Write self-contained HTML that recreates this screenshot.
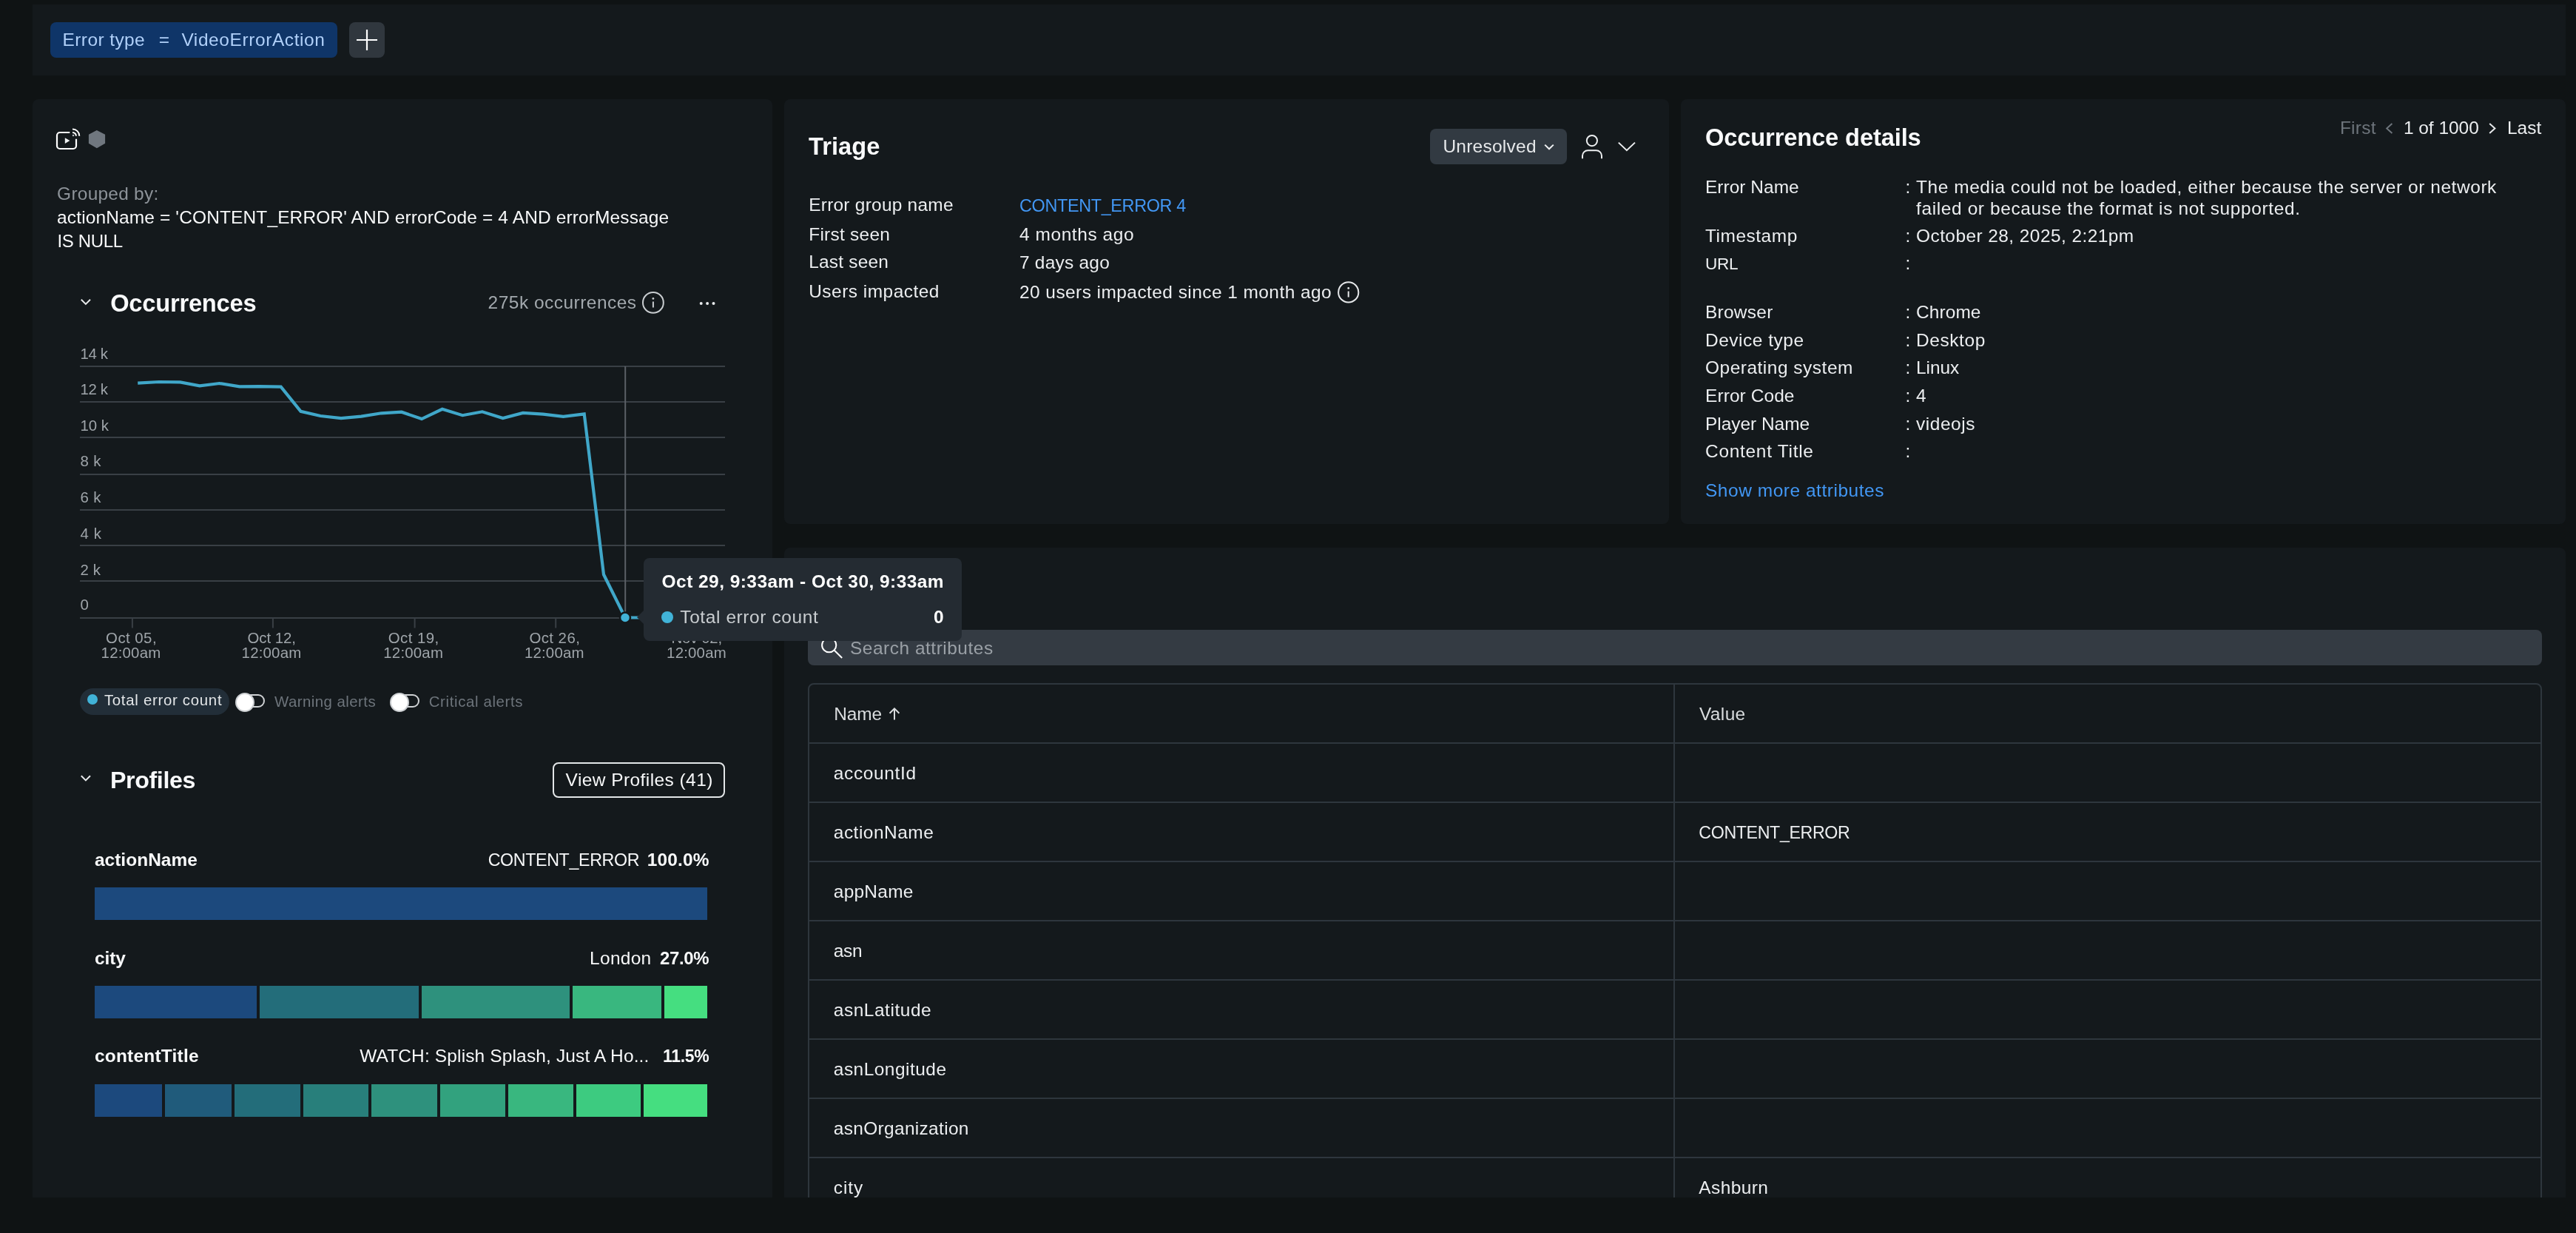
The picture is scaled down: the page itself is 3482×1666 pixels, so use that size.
<!DOCTYPE html>
<html lang="en"><head><meta charset="utf-8"><title>Errors inbox - CONTENT_ERROR 4</title>
<style>
*{box-sizing:border-box;margin:0;padding:0}
html,body{width:3482px;height:1666px;overflow:hidden;background:#0f1314}
body{position:relative;font-family:"Liberation Sans", Arial, sans-serif;color:#eceef0}
header,section,aside,footer,svg,.t,section div,header div,aside div{position:absolute}
.t{white-space:pre;line-height:1;display:block;font-weight:400;text-decoration:none}
header,section,aside{will-change:transform}
h2.t,b.t{font-weight:700}
.panel{background:#14191c;border-radius:8px;overflow:hidden}
.topbar{left:44px;top:6px;width:3424px;height:96px;background:#14191c}
.chip{border-radius:8px;background:#0f3568}
.addbtn{border-radius:8px;background:#30373e}
.left{left:44px;top:134px;width:1000px;height:1484px;border-radius:8px 8px 0 0}
.triage{left:1060px;top:134px;width:1196px;height:574px}
.details{left:2272px;top:134px;width:1196px;height:574px}
.attrs{left:1060px;top:740px;width:2408px;height:878px;border-radius:8px 8px 0 0}
.pill{border-radius:18px;background:#222e38}
.dot{border-radius:50%;background:#41b3d8}
.toggle{width:38px;height:18.4px;border:2px solid #d0d3d5;border-radius:9.2px}
.knob{width:26px;height:26px;border-radius:50%;background:#fff;border:2px solid #cdd0d3}
.vbtn{border:2px solid #e3e6e8;border-radius:8px}
.ubtn{border-radius:8px;background:#323a42}
.search{border-radius:8px;background:#343b43}
.table{border:2px solid #2e363d;border-radius:8px}
.hr,.vr{background:#2e363d}
.tip{left:870px;top:754px;width:430px;height:112px;border-radius:8px;background:#242b32}
.tiparrow{width:0;height:0;border-top:9px solid transparent;border-bottom:9px solid transparent;border-right:9px solid #242b32}
.bottom{left:0;top:1618px;width:3482px;height:48px;background:#0f1314}
</style></head>
<body>
<header class="topbar">
<div class="chip" style="left:24px;top:24px;width:388px;height:48px"></div>
<span class="t" style="left:40.5px;top:36px;font-size:24.48px;color:#b0d0f9;letter-spacing:0.42px">Error type</span>
<span class="t" style="left:170.7px;top:36px;font-size:24.48px;color:#b0d0f9">=</span>
<span class="t" style="left:201.4px;top:36px;font-size:24.48px;color:#b0d0f9;letter-spacing:0.60px">VideoErrorAction</span>
<div class="addbtn" style="left:428px;top:24px;width:48px;height:48px"></div>
<svg style="left:428px;top:24px" width="48" height="48" viewBox="472 30 48 48" fill="none"><path d="M482 54H510M496 40V68" stroke="#fff" stroke-width="2.2"/></svg>
</header>
<section class="panel left">
<svg style="left:22px;top:26px" width="90" height="56" viewBox="66 160 90 56" fill="none" stroke="#fff" stroke-width="2.2"><path d="M94.3 179H81a4 4 0 0 0-4 4v14a4 4 0 0 0 4 4h18a4 4 0 0 0 4-4V187.7"/>
<path d="M87.8 186.2V193.9L94.4 190Z" fill="#f1f3f4" stroke="none"/>
<path d="M98 179a4.8 4.8 0 0 1 4.9 4.7M98 174.5a9.2 9.2 0 0 1 9.3 9.2" stroke-width="2"/>
<rect x="97.9" y="181.9" width="2.2" height="2.2" fill="#b5babe" stroke="none"/>
<path d="M130.8 175.9L142.1 181.8V193.8L130.9 200.2L119.9 193.8V181.8Z" fill="#70777f" stroke="none"/></svg>
<span class="t" style="left:33.1px;top:116px;font-size:24.48px;color:#8d9399;letter-spacing:0.25px">Grouped by:</span>
<span class="t" style="left:33.1px;top:148px;font-size:24.48px;color:#f8f9fa;letter-spacing:0.14px">actionName = 'CONTENT_ERROR' AND errorCode = 4 AND errorMessage</span>
<span class="t" style="left:33.5px;top:180.4px;font-size:24.03px;color:#f8f9fa;letter-spacing:-0.35px">IS NULL</span>
<svg style="left:56px;top:256px" width="900" height="40" viewBox="100 390 900 40" fill="none" stroke="#e8eaec" stroke-width="2"><path d="M109.8 404.8L115.9 410.9L122 404.8"/>
<circle cx="882.9" cy="408.9" r="13.9" stroke="#c9cdd0"/><path d="M882.9 407.5V415.5" stroke="#c9cdd0"/><circle cx="882.9" cy="403.4" r="1.4" fill="#c9cdd0" stroke="none"/>
<circle cx="947.7" cy="410.1" r="2" fill="#e8eaec" stroke="none"/><circle cx="956.1" cy="410.1" r="2" fill="#e8eaec" stroke="none"/><circle cx="964.5" cy="410.1" r="2" fill="#e8eaec" stroke="none"/></svg>
<h2 class="t" style="left:105.2px;top:260.1px;font-size:32.64px;color:#f8f9fa;letter-spacing:-0.21px">Occurrences</h2>
<span class="t" style="left:615.6px;top:262.8px;font-size:24.48px;color:#a3a9ae;letter-spacing:0.49px">275k occurrences</span>
<svg style="left:0px;top:306px" width="1000" height="440" viewBox="44 440 1000 440" fill="none"><path d="M108 495H980" stroke="#393f45" stroke-width="2"/><path d="M108 543H980" stroke="#393f45" stroke-width="2"/><path d="M108 591H980" stroke="#393f45" stroke-width="2"/><path d="M108 641H980" stroke="#393f45" stroke-width="2"/><path d="M108 689H980" stroke="#393f45" stroke-width="2"/><path d="M108 737H980" stroke="#393f45" stroke-width="2"/><path d="M108 785H980" stroke="#393f45" stroke-width="2"/><path d="M108 835H980" stroke="#393f45" stroke-width="2"/><path d="M178.9 835V848.5" stroke="#393f45" stroke-width="2"/><path d="M368.9 835V848.5" stroke="#393f45" stroke-width="2"/><path d="M560.6 835V848.5" stroke="#393f45" stroke-width="2"/><path d="M751.2 835V848.5" stroke="#393f45" stroke-width="2"/><path d="M941.2 835V848.5" stroke="#393f45" stroke-width="2"/><path d="M845.2 495V835" stroke="#5b6066" stroke-width="2"/><polyline points="186.2,517.6 214.8,516.0 243.6,516.4 269.9,521.3 296.6,518.0 323.8,522.3 351.1,522.1 379.7,522.7 406.5,555.8 433.2,562.0 461.0,565.1 488.3,562.6 515.5,558.3 542.8,556.7 570.0,566.1 597.8,552.8 625.2,561.2 651.9,556.3 679.7,565.1 706.9,557.9 734.2,559.6 761.4,562.8 789.7,559.3 816,776.3 845.0,834.5 900,834.5" stroke="#40a7c9" stroke-width="4.2"/><circle cx="845" cy="834.5" r="7" fill="#41b3d8" stroke="#14191c" stroke-width="2.5"/></svg>
<span class="t" style="left:64.4px;top:334.4px;font-size:20.4px;color:#9fa5aa;letter-spacing:-0.35px">14 k</span>
<span class="t" style="left:64.4px;top:382.4px;font-size:20.4px;color:#9fa5aa;letter-spacing:-0.35px">12 k</span>
<span class="t" style="left:64.4px;top:431px;font-size:20.4px;color:#9fa5aa;letter-spacing:-0.02px">10 k</span>
<span class="t" style="left:64.4px;top:479.4px;font-size:20.4px;color:#9fa5aa;letter-spacing:0.40px">8 k</span>
<span class="t" style="left:64.4px;top:528.1px;font-size:20.4px;color:#9fa5aa;letter-spacing:0.40px">6 k</span>
<span class="t" style="left:64.4px;top:576.6px;font-size:20.4px;color:#9fa5aa;letter-spacing:0.65px">4 k</span>
<span class="t" style="left:64.4px;top:625.5px;font-size:20.4px;color:#9fa5aa;letter-spacing:0.15px">2 k</span>
<span class="t" style="left:64.4px;top:673.1px;font-size:20.4px;color:#9fa5aa">0</span>
<span class="t" style="left:99.1px;top:717.9px;font-size:20.4px;color:#9fa5aa;letter-spacing:0.46px">Oct 05,</span>
<span class="t" style="left:92.6px;top:737.9px;font-size:20.4px;color:#9fa5aa;letter-spacing:0.21px">12:00am</span>
<span class="t" style="left:290.5px;top:717.9px;font-size:20.4px;color:#9fa5aa;letter-spacing:-0.04px">Oct 12,</span>
<span class="t" style="left:282.6px;top:737.9px;font-size:20.4px;color:#9fa5aa;letter-spacing:0.21px">12:00am</span>
<span class="t" style="left:480.8px;top:717.9px;font-size:20.4px;color:#9fa5aa;letter-spacing:0.46px">Oct 19,</span>
<span class="t" style="left:474.3px;top:737.9px;font-size:20.4px;color:#9fa5aa;letter-spacing:0.21px">12:00am</span>
<span class="t" style="left:671.4px;top:717.9px;font-size:20.4px;color:#9fa5aa;letter-spacing:0.46px">Oct 26,</span>
<span class="t" style="left:664.9px;top:737.9px;font-size:20.4px;color:#9fa5aa;letter-spacing:0.21px">12:00am</span>
<span class="t" style="left:863.6px;top:717.9px;font-size:20.4px;color:#9fa5aa;letter-spacing:-0.30px">Nov 02,</span>
<span class="t" style="left:857.1px;top:737.9px;font-size:20.4px;color:#9fa5aa;letter-spacing:0.21px">12:00am</span>
<div class="pill" style="left:64px;top:796px;width:202px;height:36px"></div>
<div class="dot" style="left:74px;top:804px;width:14px;height:14px"></div>
<span class="t" style="left:96.9px;top:802.4px;font-size:20.4px;color:#e3e6e8;letter-spacing:0.71px">Total error count</span>
<div class="toggle" style="left:276px;top:803.7px"></div>
<div class="knob" style="left:274px;top:802px"></div>
<span class="t" style="left:327px;top:804.3px;font-size:20.4px;color:#6d747b;letter-spacing:0.46px">Warning alerts</span>
<div class="toggle" style="left:484.8px;top:803.7px"></div>
<div class="knob" style="left:482.8px;top:802px"></div>
<span class="t" style="left:535.7px;top:804.3px;font-size:20.4px;color:#6d747b;letter-spacing:0.64px">Critical alerts</span>
<svg style="left:56px;top:906px" width="40" height="30" viewBox="100 1040 40 30" fill="none" stroke="#e8eaec" stroke-width="2"><path d="M109.8 1048.3L115.9 1054.4L122 1048.3"/></svg>
<h2 class="t" style="left:104.9px;top:903.9px;font-size:32.2px;color:#f8f9fa;letter-spacing:-0.35px">Profiles</h2>
<div class="vbtn" style="left:703px;top:896px;width:233px;height:48px"></div>
<span class="t" style="left:720.6px;top:908.2px;font-size:24.48px;color:#f8f9fa;letter-spacing:0.44px">View Profiles (41)</span>
<b class="t" style="left:83.9px;top:1015.5px;font-size:24.48px;color:#f8f9fa;letter-spacing:0.03px">actionName</b>
<span class="t" style="left:615.7px;top:1016.5px;font-size:23.22px;color:#f8f9fa;letter-spacing:-0.35px">CONTENT_ERROR</span>
<b class="t" style="left:830.7px;top:1015.5px;font-size:24.48px;color:#f8f9fa;letter-spacing:0.18px">100.0%</b>
<div class="seg" style="left:84px;top:1065px;width:828px;height:44px;background:#1c497d"></div>
<b class="t" style="left:83.9px;top:1148.6px;font-size:24.48px;color:#f8f9fa;letter-spacing:-0.06px">city</b>
<span class="t" style="left:753.1px;top:1148.6px;font-size:24.48px;color:#f8f9fa;letter-spacing:0.29px">London</span>
<b class="t" style="left:848.1px;top:1149px;font-size:23.95px;color:#f8f9fa;letter-spacing:-0.35px">27.0%</b>
<div class="seg" style="left:84px;top:1198px;width:219px;height:44px;background:#1c497d"></div>
<div class="seg" style="left:307.2px;top:1198px;width:214.8px;height:44px;background:#236d7a"></div>
<div class="seg" style="left:526.2px;top:1198px;width:199.8px;height:44px;background:#2e917d"></div>
<div class="seg" style="left:730.1px;top:1198px;width:120.1px;height:44px;background:#39b77f"></div>
<div class="seg" style="left:854px;top:1198px;width:58px;height:44px;background:#45de80"></div>
<b class="t" style="left:83.9px;top:1281.2px;font-size:24.48px;color:#f8f9fa;letter-spacing:0.22px">contentTitle</b>
<span class="t" style="left:442.2px;top:1281.2px;font-size:24.48px;color:#f8f9fa;letter-spacing:0.15px">WATCH: Splish Splash, Just A Ho...</span>
<b class="t" style="left:852.1px;top:1282.4px;font-size:22.99px;color:#f8f9fa;letter-spacing:-0.35px">11.5%</b>
<div class="seg" style="left:84px;top:1331px;width:91px;height:44px;background:#1c497d"></div>
<div class="seg" style="left:179px;top:1331px;width:90px;height:44px;background:#205b7b"></div>
<div class="seg" style="left:273.2px;top:1331px;width:88.8px;height:44px;background:#236d7a"></div>
<div class="seg" style="left:366.2px;top:1331px;width:87.8px;height:44px;background:#287f7b"></div>
<div class="seg" style="left:458.1px;top:1331px;width:88.9px;height:44px;background:#2e917d"></div>
<div class="seg" style="left:551.1px;top:1331px;width:87.9px;height:44px;background:#32a27e"></div>
<div class="seg" style="left:643px;top:1331px;width:88px;height:44px;background:#39b77f"></div>
<div class="seg" style="left:735px;top:1331px;width:87.2px;height:44px;background:#3dcb80"></div>
<div class="seg" style="left:826px;top:1331px;width:86px;height:44px;background:#45de80"></div>
</section>
<section class="panel triage">
<h2 class="t" style="left:33px;top:48.1px;font-size:32.64px;color:#f8f9fa;letter-spacing:0.04px">Triage</h2>
<div class="ubtn" style="left:873px;top:40px;width:185px;height:48px"></div>
<span class="t" style="left:890.4px;top:52px;font-size:24.48px;color:#e6e8ea;letter-spacing:0.26px">Unresolved</span>
<svg style="left:1020px;top:36px" width="150" height="56" viewBox="2080 170 150 56" fill="none" stroke="#eceef0" stroke-width="2"><path d="M2088.2 195.6L2094 201.3L2099.8 195.6"/>
<circle cx="2151.9" cy="190.1" r="7.1"/><path d="M2139 214.2V210.5a7.3 7.3 0 0 1 7.3-7.3h11.4a7.3 7.3 0 0 1 7.3 7.3V214.2"/>
<path d="M2187.8 192.6L2198.9 203.2L2210 192.6"/></svg>
<span class="t" style="left:33.2px;top:131px;font-size:24.48px;color:#eceef0;letter-spacing:0.24px">Error group name</span>
<span class="t" style="left:318px;top:132.7px;font-size:23.42px;color:#4297f4;letter-spacing:-0.35px">CONTENT_ERROR 4</span>
<span class="t" style="left:33.2px;top:170.9px;font-size:24.48px;color:#eceef0;letter-spacing:0.26px">First seen</span>
<span class="t" style="left:318px;top:171.3px;font-size:24.48px;color:#eceef0;letter-spacing:0.57px">4 months ago</span>
<span class="t" style="left:33.2px;top:207.9px;font-size:24.48px;color:#eceef0;letter-spacing:0.21px">Last seen</span>
<span class="t" style="left:318px;top:209px;font-size:24.48px;color:#eceef0;letter-spacing:0.23px">7 days ago</span>
<span class="t" style="left:33.2px;top:247.5px;font-size:24.48px;color:#eceef0;letter-spacing:0.48px">Users impacted</span>
<span class="t" style="left:318px;top:249px;font-size:24.48px;color:#eceef0;letter-spacing:0.44px">20 users impacted since 1 month ago</span>
<svg style="left:740px;top:241px" width="44" height="40" viewBox="1800 375 44 40" fill="none" stroke="#e6e8ea" stroke-width="2"><circle cx="1822.7" cy="394.9" r="13.6"/><path d="M1822.7 393.5V401.5"/><circle cx="1822.7" cy="389.4" r="1.4" fill="#e6e8ea" stroke="none"/></svg>
</section>
<section class="panel details">
<h2 class="t" style="left:33px;top:35.6px;font-size:32.64px;color:#f8f9fa;letter-spacing:-0.12px">Occurrence details</h2>
<span class="t" style="left:890.9px;top:27px;font-size:24.48px;color:#6d747b;letter-spacing:0.26px">First</span>
<span class="t" style="left:976.9px;top:27px;font-size:24.48px;color:#eceef0;letter-spacing:-0.02px">1 of 1000</span>
<span class="t" style="left:1117px;top:27px;font-size:24.48px;color:#eceef0;letter-spacing:-0.02px">Last</span>
<svg style="left:943px;top:26px" width="170" height="28" viewBox="3215 160 170 28" fill="none" stroke-width="2"><path d="M3233.4 167L3226.2 173.4L3233.4 180" stroke="#6d747b"/><path d="M3365.2 167L3372.4 173.4L3365.2 180" stroke="#e6e8ea"/></svg>
<span class="t" style="left:33px;top:107.1px;font-size:24.48px;color:#eceef0;letter-spacing:0.03px">Error Name</span>
<span class="t" style="left:303.4px;top:107.1px;font-size:24.48px;color:#eceef0">:</span>
<span class="t" style="left:318px;top:107.1px;font-size:24.48px;color:#eceef0;letter-spacing:0.57px">The media could not be loaded, either because the server or network</span>
<span class="t" style="left:318px;top:135.9px;font-size:24.48px;color:#eceef0;letter-spacing:0.62px">failed or because the format is not supported.</span>
<span class="t" style="left:33px;top:173.1px;font-size:24.48px;color:#eceef0;letter-spacing:0.52px">Timestamp</span>
<span class="t" style="left:303.4px;top:173.1px;font-size:24.48px;color:#eceef0">:</span>
<span class="t" style="left:318px;top:173.1px;font-size:24.48px;color:#eceef0;letter-spacing:0.43px">October 28, 2025, 2:21pm</span>
<span class="t" style="left:33px;top:211.5px;font-size:22.6px;color:#eceef0;letter-spacing:-0.35px">URL</span>
<span class="t" style="left:303.4px;top:209.9px;font-size:24.48px;color:#eceef0">:</span>
<span class="t" style="left:33px;top:276.2px;font-size:24.48px;color:#eceef0;letter-spacing:0.26px">Browser</span>
<span class="t" style="left:303.4px;top:276.2px;font-size:24.48px;color:#eceef0">:</span>
<span class="t" style="left:318px;top:276.2px;font-size:24.48px;color:#eceef0;letter-spacing:0.09px">Chrome</span>
<span class="t" style="left:33px;top:314px;font-size:24.48px;color:#eceef0;letter-spacing:0.52px">Device type</span>
<span class="t" style="left:303.4px;top:314px;font-size:24.48px;color:#eceef0">:</span>
<span class="t" style="left:318px;top:314px;font-size:24.48px;color:#eceef0;letter-spacing:0.59px">Desktop</span>
<span class="t" style="left:33px;top:351.4px;font-size:24.48px;color:#eceef0;letter-spacing:0.51px">Operating system</span>
<span class="t" style="left:303.4px;top:351.4px;font-size:24.48px;color:#eceef0">:</span>
<span class="t" style="left:318px;top:351.4px;font-size:24.48px;color:#eceef0;letter-spacing:-0.05px">Linux</span>
<span class="t" style="left:33px;top:389.1px;font-size:24.48px;color:#eceef0;letter-spacing:0.09px">Error Code</span>
<span class="t" style="left:303.4px;top:389.1px;font-size:24.48px;color:#eceef0">:</span>
<span class="t" style="left:318px;top:389.1px;font-size:24.48px;color:#eceef0">4</span>
<span class="t" style="left:33px;top:426.5px;font-size:24.48px;color:#eceef0;letter-spacing:-0.03px">Player Name</span>
<span class="t" style="left:303.4px;top:426.5px;font-size:24.48px;color:#eceef0">:</span>
<span class="t" style="left:318px;top:426.5px;font-size:24.48px;color:#eceef0;letter-spacing:0.54px">videojs</span>
<span class="t" style="left:33px;top:464.2px;font-size:24.48px;color:#eceef0;letter-spacing:0.71px">Content Title</span>
<span class="t" style="left:303.4px;top:464.2px;font-size:24.48px;color:#eceef0">:</span>
<a class="t" style="left:33px;top:516.8px;font-size:24.48px;color:#4297f4;letter-spacing:0.54px">Show more attributes</a>
</section>
<section class="panel attrs">
<div class="search" style="left:32px;top:111px;width:2344px;height:48px"></div>
<svg style="left:40px;top:115px" width="44" height="40" viewBox="1100 855 44 40" fill="none" stroke="#fff" stroke-width="2"><circle cx="1120.7" cy="871.7" r="9.6"/><path d="M1127.8 878.8L1138.2 889"/></svg>
<span class="t" style="left:89px;top:123.5px;font-size:24.48px;color:#9aa0a6;letter-spacing:0.51px">Search attributes</span>
<div class="table" style="left:32px;top:183px;width:2344px;height:720px"></div>
<div class="vr" style="left:1202px;top:185px;width:2px;height:700px"></div>
<div class="hr" style="left:34px;top:263px;width:2340px;height:2px"></div>
<div class="hr" style="left:34px;top:343px;width:2340px;height:2px"></div>
<div class="hr" style="left:34px;top:423px;width:2340px;height:2px"></div>
<div class="hr" style="left:34px;top:503px;width:2340px;height:2px"></div>
<div class="hr" style="left:34px;top:583px;width:2340px;height:2px"></div>
<div class="hr" style="left:34px;top:663px;width:2340px;height:2px"></div>
<div class="hr" style="left:34px;top:743px;width:2340px;height:2px"></div>
<div class="hr" style="left:34px;top:823px;width:2340px;height:2px"></div>
<span class="t" style="left:67.3px;top:212.8px;font-size:24.48px;color:#d9dcde;letter-spacing:-0.16px">Name</span>
<svg style="left:136px;top:210px" width="26" height="28" viewBox="1196 950 26 28" fill="none" stroke="#d9dcde" stroke-width="2"><path d="M1209 972.4V957.6M1202.6 963.8L1209 957.4L1215.4 963.8"/></svg>
<span class="t" style="left:1237px;top:212.8px;font-size:24.48px;color:#d9dcde;letter-spacing:0.36px">Value</span>
<span class="t" style="left:66.8px;top:293px;font-size:24.48px;color:#eceef0;letter-spacing:0.64px">accountId</span>
<span class="t" style="left:66.8px;top:373px;font-size:24.48px;color:#eceef0;letter-spacing:0.49px">actionName</span>
<span class="t" style="left:1236.3px;top:374.1px;font-size:23.19px;color:#eceef0;letter-spacing:-0.35px">CONTENT_ERROR</span>
<span class="t" style="left:66.8px;top:453px;font-size:24.48px;color:#eceef0;letter-spacing:0.25px">appName</span>
<span class="t" style="left:66.8px;top:533px;font-size:24.48px;color:#eceef0;letter-spacing:-0.33px">asn</span>
<span class="t" style="left:66.8px;top:613px;font-size:24.48px;color:#eceef0;letter-spacing:0.53px">asnLatitude</span>
<span class="t" style="left:66.8px;top:693px;font-size:24.48px;color:#eceef0;letter-spacing:0.48px">asnLongitude</span>
<span class="t" style="left:66.8px;top:773px;font-size:24.48px;color:#eceef0;letter-spacing:0.32px">asnOrganization</span>
<span class="t" style="left:66.8px;top:853px;font-size:24.48px;color:#eceef0;letter-spacing:0.93px">city</span>
<span class="t" style="left:1236.3px;top:853px;font-size:24.48px;color:#eceef0;letter-spacing:0.41px">Ashburn</span>
</section>
<aside class="tip">
<div class="tiparrow" style="left:-9px;top:71px"></div>
<div class="dot" style="left:24px;top:72px;width:16px;height:16px"></div>
<b class="t" style="left:24.6px;top:19.6px;font-size:24.48px;color:#ffffff;letter-spacing:0.46px">Oct 29, 9:33am - Oct 30, 9:33am</b>
<span class="t" style="left:49.3px;top:68.1px;font-size:24.48px;color:#c9cdd0;letter-spacing:0.60px">Total error count</span>
<b class="t" style="left:391.9px;top:68.1px;font-size:24.48px;color:#ffffff">0</b>
</aside>
<footer class="bottom"></footer>
</body></html>
